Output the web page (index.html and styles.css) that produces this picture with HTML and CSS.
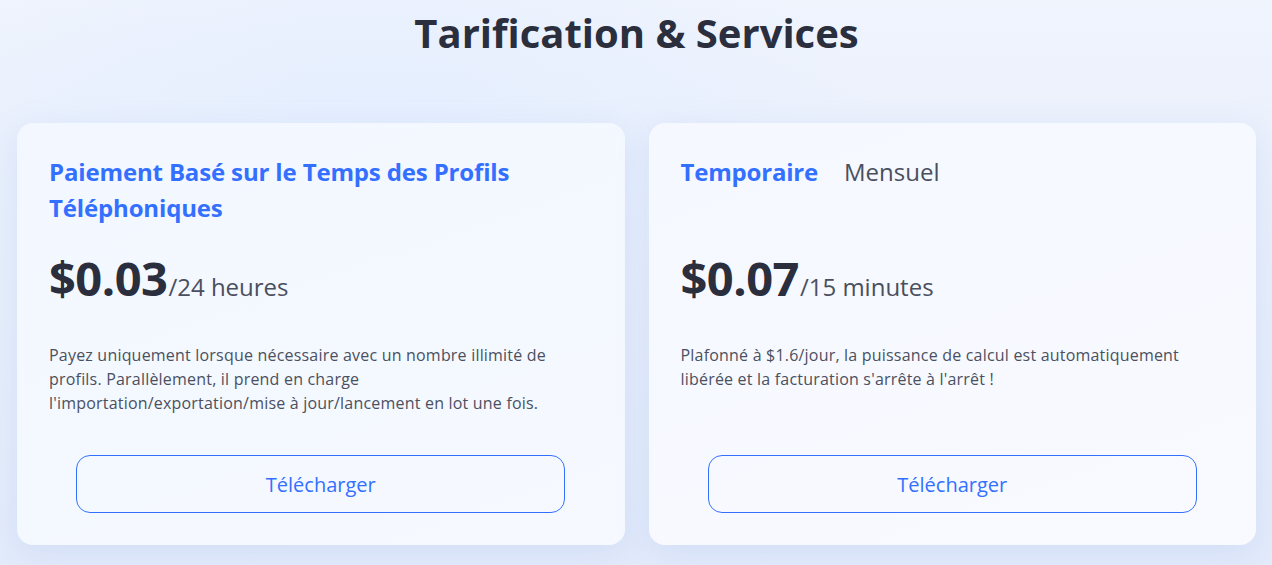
FILE: index.html
```html
<!DOCTYPE html>
<html lang="fr">
<head>
<meta charset="utf-8">
<title>Tarification &amp; Services</title>
<link rel="stylesheet" href="styles.css">
</head>
<body>
<main class="page">
  <h1 class="title">Tarification &amp; Services</h1>
  <section class="cards">
    <article class="card">
      <div class="card-head">
        <h2 class="card-title">Paiement Basé sur le Temps des Profils Téléphoniques</h2>
      </div>
      <div class="price"><span class="amount">$0.03</span><span class="unit">/24 heures</span></div>
      <p class="desc">Payez uniquement lorsque nécessaire avec un nombre illimité de profils. Parallèlement, il prend en charge l'importation/exportation/mise à jour/lancement en lot une fois.</p>
      <button class="btn" type="button">Télécharger</button>
    </article>
    <article class="card card-alt">
      <div class="card-head">
        <div class="tabs">
          <span class="tab tab-active">Temporaire</span>
          <span class="tab">Mensuel</span>
        </div>
      </div>
      <div class="price"><span class="amount">$0.07</span><span class="unit">/15 minutes</span></div>
      <p class="desc">Plafonné à $1.6/jour, la puissance de calcul est automatiquement libérée et la facturation s'arrête à l'arrêt !</p>
      <button class="btn" type="button">Télécharger</button>
    </article>
  </section>
</main>
</body>
</html>
```

FILE: styles.css
```css
* { box-sizing: border-box; }

html, body {
  margin: 0;
  padding: 0;
}

body {
  width: 1272px;
  height: 565px;
  overflow: hidden;
  font-family: "Open Sans", "Noto Sans", "Liberation Sans", sans-serif;
  color: #2a2e3d;
  background:
    radial-gradient(ellipse 700px 300px at 30% 20%, rgba(228, 238, 255, 0.9), rgba(228, 238, 255, 0) 70%),
    linear-gradient(180deg, #f0f4fd 0%, #e8effc 40%, #e3ebfb 100%);
}

.page {
  padding: 0 16px 0 17px;
}

.title {
  margin: 0;
  padding-top: 6px;
  height: 123px;
  text-align: center;
  font-size: 40px;
  line-height: 54px;
  font-weight: 700;
  color: #2a2e3d;
}

.cards {
  display: grid;
  grid-template-columns: 1fr 1fr;
  gap: 24px;
}

.card {
  display: flex;
  flex-direction: column;
  padding: 31px 32px 32px;
  border-radius: 16px;
  background: linear-gradient(160deg, #f3f7ff 0%, #f4f8ff 60%, #f6f9ff 100%);
  box-shadow: 0 8px 30px rgba(160, 185, 235, 0.25);
}

.card-alt {
  background: linear-gradient(160deg, #f5f8ff 0%, #f8faff 100%);
}

.card-head {
  min-height: 72px;
}

.card-title {
  margin: 0;
  font-size: 24px;
  line-height: 36px;
  font-weight: 700;
  color: #3370ff;
  letter-spacing: -0.15px;
}

.tabs {
  display: flex;
  gap: 26px;
  font-size: 24px;
  line-height: 36px;
}

.tab {
  color: #4a4f5e;
  font-weight: 400;
}

.tab-active {
  color: #3370ff;
  font-weight: 700;
  letter-spacing: -0.2px;
}

.price {
  margin-top: 20px;
  height: 64px;
  line-height: 64px;
  white-space: nowrap;
}

.amount {
  font-size: 47px;
  font-weight: 700;
  color: #2a2e3d;
  letter-spacing: -0.5px;
}

.unit {
  font-size: 24px;
  color: #4a4f5e;
  margin-left: 1px;
}

.desc {
  margin: 33px 0 40px;
  max-width: 512px;
  font-size: 16px;
  line-height: 24px;
  letter-spacing: 0.2px;
  color: #4b5060;
}

.btn {
  margin-top: auto;
  align-self: center;
  width: 90%;
  height: 58px;
  border: 1px solid #3370ff;
  border-radius: 14px;
  background: transparent;
  color: #3370ff;
  font-family: inherit;
  font-size: 20px;
  cursor: pointer;
}
```
